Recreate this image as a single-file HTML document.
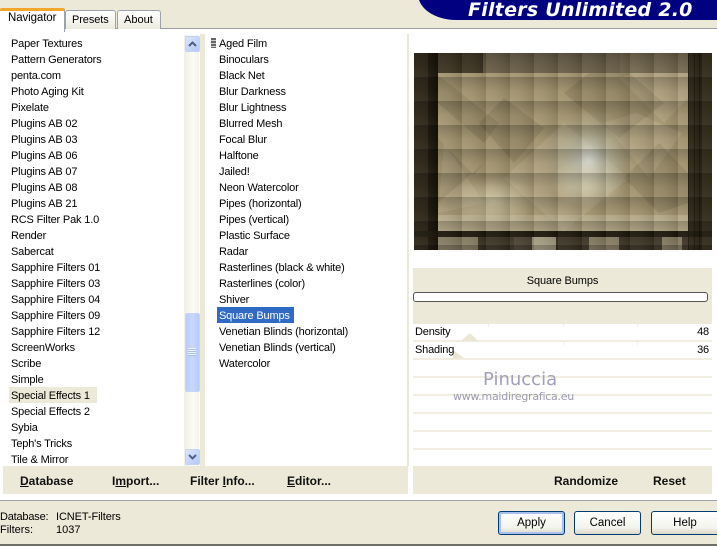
<!DOCTYPE html>
<html><head><meta charset="utf-8">
<style>
html,body{margin:0;padding:0}
body{width:717px;height:546px;overflow:hidden;position:relative;background:#ECE9D8;font-family:"Liberation Sans",sans-serif;font-size:11px;color:#000}
.a{position:absolute}
.r{position:absolute;white-space:nowrap;height:16px;line-height:18px;letter-spacing:-.17px}
.b{position:absolute;font-weight:bold;white-space:nowrap;line-height:16px;top:473px;font-size:12px;color:#111}
.btn{position:absolute;top:511px;height:22px;border:1px solid #003C74;border-radius:3px;background:linear-gradient(#fff,#f4f4ee 70%,#dcd8c8);text-align:center;line-height:22px;font-size:11.5px}
.ln{position:absolute;left:413px;width:299px;height:2px;background:#F1EEE0}
</style></head><body>
<!-- header -->
<div class="a" style="left:418px;top:-30px;width:320px;height:50px;background:#000080;border-bottom-left-radius:38px 26px"></div>
<div class="a" style="left:468px;top:-1px;color:#fff;font:italic bold 19px/22px 'DejaVu Sans',sans-serif;white-space:nowrap;letter-spacing:.25px">Filters Unlimited 2.0</div>
<!-- main panel -->
<div class="a" style="left:0;top:28px;width:717px;height:471px;background:#fff;border-top:1px solid #9C9FA8;border-bottom:1px solid #9CA3AB;box-sizing:content-box"></div>
<!-- tabs -->
<div class="a" style="left:0;top:8px;width:64px;height:21px;background:#fff;border-top:3px solid #F2A62A;border-right:1px solid #9CA3AB;border-radius:2px 2px 0 0;box-sizing:content-box"></div>
<div class="a" style="left:8px;top:11px;line-height:14px;font-size:11.5px;letter-spacing:-.1px">Navigator</div>
<div class="a" style="left:65px;top:10px;width:49px;height:18px;background:linear-gradient(#fff,#ECEBE0);border:1px solid #9CA3AB;border-bottom:0;border-radius:3px 3px 0 0"></div>
<div class="a" style="left:72px;top:13px;line-height:14px;letter-spacing:-.1px">Presets</div>
<div class="a" style="left:117px;top:10px;width:42px;height:18px;background:linear-gradient(#fff,#ECEBE0);border:1px solid #9CA3AB;border-bottom:0;border-radius:3px 3px 0 0"></div>
<div class="a" style="left:124px;top:13px;line-height:14px">About</div>
<!-- separators -->
<div class="a" style="left:200px;top:34px;width:5px;height:432px;background:#ECE9D8"></div>
<div class="a" style="left:407px;top:34px;width:2px;height:432px;background:#ECE9D8"></div>
<!-- scrollbar -->
<div class="a" style="left:184px;top:35px;width:15px;height:431px;background:linear-gradient(90deg,#F1EFE4,#FBFBF7 60%,#F3F1E8)"></div>
<div class="a" style="left:185px;top:36px;width:13px;height:14px;background:linear-gradient(135deg,#DCE6FB,#B4C8F6);border:1px solid #C3D3F6;border-radius:2px"></div>
<svg class="a" style="left:185px;top:36px" width="15" height="16"><path d="M4 10 L7.5 6.5 L11 10" fill="none" stroke="#4D6185" stroke-width="2"/></svg>
<div class="a" style="left:185px;top:313px;width:13px;height:77px;background:linear-gradient(90deg,#BBCDF8,#C9D8FB 50%,#B8CBF6);border:1px solid #C8D6F6;border-radius:2px"></div>
<div class="a" style="left:188px;top:348px;width:8px;height:8px;background:repeating-linear-gradient(#EEF3FE 0 1px,#A9BEEE 1px 2px)"></div>
<div class="a" style="left:185px;top:449px;width:13px;height:14px;background:linear-gradient(135deg,#DCE6FB,#B4C8F6);border:1px solid #C3D3F6;border-radius:2px"></div>
<svg class="a" style="left:185px;top:449px" width="15" height="16"><path d="M4 6 L7.5 9.5 L11 6" fill="none" stroke="#4D6185" stroke-width="2"/></svg>
<!-- left list -->
<div class="a" style="left:9px;top:387px;width:88px;height:16px;background:#ECE9D8"></div>
<div class="r" style="left:11px;top:35px">Paper Textures</div>
<div class="r" style="left:11px;top:51px">Pattern Generators</div>
<div class="r" style="left:11px;top:67px">penta.com</div>
<div class="r" style="left:11px;top:83px">Photo Aging Kit</div>
<div class="r" style="left:11px;top:99px">Pixelate</div>
<div class="r" style="left:11px;top:115px">Plugins AB 02</div>
<div class="r" style="left:11px;top:131px">Plugins AB 03</div>
<div class="r" style="left:11px;top:147px">Plugins AB 06</div>
<div class="r" style="left:11px;top:163px">Plugins AB 07</div>
<div class="r" style="left:11px;top:179px">Plugins AB 08</div>
<div class="r" style="left:11px;top:195px">Plugins AB 21</div>
<div class="r" style="left:11px;top:211px">RCS Filter Pak 1.0</div>
<div class="r" style="left:11px;top:227px">Render</div>
<div class="r" style="left:11px;top:243px">Sabercat</div>
<div class="r" style="left:11px;top:259px">Sapphire Filters 01</div>
<div class="r" style="left:11px;top:275px">Sapphire Filters 03</div>
<div class="r" style="left:11px;top:291px">Sapphire Filters 04</div>
<div class="r" style="left:11px;top:307px">Sapphire Filters 09</div>
<div class="r" style="left:11px;top:323px">Sapphire Filters 12</div>
<div class="r" style="left:11px;top:339px">ScreenWorks</div>
<div class="r" style="left:11px;top:355px">Scribe</div>
<div class="r" style="left:11px;top:371px">Simple</div>
<div class="r" style="left:11px;top:387px">Special Effects 1</div>
<div class="r" style="left:11px;top:403px">Special Effects 2</div>
<div class="r" style="left:11px;top:419px">Sybia</div>
<div class="r" style="left:11px;top:435px">Teph's Tricks</div>
<div class="r" style="left:11px;top:451px">Tile &amp; Mirror</div>
<!-- middle list -->
<div class="a" style="left:211px;top:38px;width:5px;height:10px;background:repeating-linear-gradient(#666 0 2px,#ccc 2px 3px)"></div>
<div class="a" style="left:217px;top:307px;width:77px;height:16px;background:#316AC5"></div>
<div class="r" style="left:219px;top:35px">Aged Film</div>
<div class="r" style="left:219px;top:51px">Binoculars</div>
<div class="r" style="left:219px;top:67px">Black Net</div>
<div class="r" style="left:219px;top:83px">Blur Darkness</div>
<div class="r" style="left:219px;top:99px">Blur Lightness</div>
<div class="r" style="left:219px;top:115px">Blurred Mesh</div>
<div class="r" style="left:219px;top:131px">Focal Blur</div>
<div class="r" style="left:219px;top:147px">Halftone</div>
<div class="r" style="left:219px;top:163px">Jailed!</div>
<div class="r" style="left:219px;top:179px">Neon Watercolor</div>
<div class="r" style="left:219px;top:195px">Pipes (horizontal)</div>
<div class="r" style="left:219px;top:211px">Pipes (vertical)</div>
<div class="r" style="left:219px;top:227px">Plastic Surface</div>
<div class="r" style="left:219px;top:243px">Radar</div>
<div class="r" style="left:219px;top:259px">Rasterlines (black &amp; white)</div>
<div class="r" style="left:219px;top:275px">Rasterlines (color)</div>
<div class="r" style="left:219px;top:291px">Shiver</div>
<div class="r" style="left:219px;top:307px;color:#fff">Square Bumps</div>
<div class="r" style="left:219px;top:323px">Venetian Blinds (horizontal)</div>
<div class="r" style="left:219px;top:339px">Venetian Blinds (vertical)</div>
<div class="r" style="left:219px;top:355px">Watercolor</div>
<!-- left footer -->
<div class="a" style="left:3px;top:466px;width:405px;height:28px;background:#ECE9D8"></div>
<div class="b" style="left:20px"><u>D</u>atabase</div>
<div class="b" style="left:112px">I<u>m</u>port...</div>
<div class="b" style="left:190px">Filter <u>I</u>nfo...</div>
<div class="b" style="left:287px"><u>E</u>ditor...</div>
<!-- preview -->
<svg class="a" style="left:414px;top:53px" width="298" height="197" viewBox="0 0 298 197">
<defs>
<linearGradient id="v" x1="0" y1="0" x2="0" y2="1"><stop offset="0" stop-color="#000" stop-opacity=".22"/><stop offset=".6" stop-color="#000" stop-opacity=".03"/><stop offset="1" stop-color="#fff" stop-opacity=".03"/></linearGradient>
<linearGradient id="h" x1="0" y1="0" x2="1" y2="0"><stop offset="0" stop-color="#fff" stop-opacity=".05"/><stop offset="1" stop-color="#000" stop-opacity=".12"/></linearGradient>
<pattern id="t" x="0" y="0" width="24" height="24" patternUnits="userSpaceOnUse"><rect width="24" height="24" fill="url(#v)"/><rect width="24" height="24" fill="url(#h)"/></pattern>
<radialGradient id="g" cx=".5" cy=".5" r=".5"><stop offset="0" stop-color="#E2E4DE" stop-opacity=".95"/><stop offset=".45" stop-color="#BFC2AE" stop-opacity=".55"/><stop offset="1" stop-color="#B8B090" stop-opacity="0"/></radialGradient>
<radialGradient id="g2" cx=".5" cy=".5" r=".5"><stop offset="0" stop-color="#E8E0BC" stop-opacity=".65"/><stop offset="1" stop-color="#E8E0BC" stop-opacity="0"/></radialGradient>
</defs>
<rect width="298" height="197" fill="#2A2212"/>
<rect x="14" y="0" width="10" height="197" fill="#1A1408"/>
<rect x="262" y="0" width="12" height="197" fill="#17120A"/>
<rect x="274" y="0" width="24" height="197" fill="#2E2616"/>
<rect x="24" y="0" width="45" height="20" fill="#3C3220"/>
<rect x="69" y="0" width="69" height="20" fill="#6A5E46"/>
<rect x="138" y="0" width="68" height="20" fill="#6A5E46"/>
<rect x="206" y="0" width="68" height="20" fill="#74684E"/>
<rect x="24" y="20" width="250" height="158" fill="#A5966F"/>
<g fill="#FFF6DC" fill-opacity=".12">
<polygon points="30,90 70,150 24,160"/><polygon points="90,125 150,70 215,125 150,178"/>
<polygon points="205,25 250,70 274,45 274,20 220,20"/><polygon points="190,70 235,125 268,80 222,60"/>
</g>
<g fill="#332C18" fill-opacity=".13">
<polygon points="24,22 85,70 70,90 24,50"/><polygon points="60,122 24,85 24,150 70,110"/>
<polygon points="210,125 245,90 274,120 274,150 245,160"/>
<polygon points="130,75 100,110 65,70 90,45"/><polygon points="150,40 205,85 250,50 215,20 175,20"/>
</g>
<ellipse cx="175" cy="107" rx="48" ry="52" fill="url(#g)"/>
<ellipse cx="172" cy="130" rx="36" ry="24" fill="url(#g2)"/>
<ellipse cx="80" cy="148" rx="44" ry="26" fill="url(#g2)"/>
<rect x="24" y="162" width="250" height="16" fill="#CFC7AC" fill-opacity=".4"/>
<rect x="0" y="178" width="298" height="6" fill="#1E180C"/>
<rect x="24" y="184" width="250" height="13" fill="#3A3122"/>
<rect x="24" y="184" width="40" height="13" fill="#857A60"/>
<rect x="100" y="184" width="36" height="13" fill="#4A4030"/>
<rect x="118" y="184" width="24" height="13" fill="#A39A80"/>
<rect x="175" y="184" width="30" height="13" fill="#857A60"/>
<rect x="248" y="184" width="20" height="13" fill="#857A60"/>
<rect width="298" height="197" fill="url(#t)"/>
<g stroke="#0C0A04" stroke-opacity=".4" stroke-width="1">
<path d="M274.5 0V197M280.5 0V197M285.5 0V197"/>
</g>
</svg>
<!-- params -->
<div class="a" style="left:413px;top:268px;width:299px;height:56px;background:#ECE9D8"></div>
<div class="a" style="left:413px;top:274px;width:299px;text-align:center;line-height:14px;letter-spacing:-.1px">Square Bumps</div>
<div class="a" style="left:413px;top:292px;width:293px;height:8px;background:#fff;border:1px solid #555;border-radius:3px"></div>
<div class="ln" style="top:340px"></div>
<div class="ln" style="top:358px"></div>
<div class="ln" style="top:376px"></div>
<div class="ln" style="top:394px"></div>
<div class="ln" style="top:412px"></div>
<div class="ln" style="top:430px"></div>
<div class="ln" style="top:448px"></div>
<svg class="a" style="left:450px;top:325px" width="40" height="36"><polygon points="11,16 20,8 28,16" fill="#ECE6D4"/><polygon points="3,25 3,33 14,33" fill="#ECE6D4"/></svg>
<div class="a" style="left:488px;top:324px;width:1px;height:3px;background:#EEE"></div>
<div class="a" style="left:563px;top:324px;width:1px;height:3px;background:#EEE"></div>
<div class="a" style="left:637px;top:324px;width:1px;height:3px;background:#EEE"></div>
<div class="a" style="left:563px;top:342px;width:1px;height:3px;background:#EEE"></div>
<div class="a" style="left:637px;top:342px;width:1px;height:3px;background:#EEE"></div>
<div class="r" style="left:415px;top:323px">Density</div>
<div class="r" style="left:415px;top:341px">Shading</div>
<div class="r" style="right:8px;top:323px">48</div>
<div class="r" style="right:8px;top:341px">36</div>
<!-- watermark -->
<div class="a" style="left:483px;top:369px;font:18px/22px 'DejaVu Sans',sans-serif;color:#A0A0BA;white-space:nowrap">Pinuccia</div>
<div class="a" style="left:453px;top:390px;font:11px/13px 'DejaVu Sans',sans-serif;color:#9A9AAE;white-space:nowrap;letter-spacing:-.25px">www.maidiregrafica.eu</div>
<!-- right footer -->
<div class="a" style="left:413px;top:466px;width:299px;height:28px;background:#ECE9D8"></div>
<div class="b" style="left:554px">Randomize</div>
<div class="b" style="left:653px">Reset</div>
<!-- status -->
<div class="a" style="left:0;top:511px;line-height:13px;white-space:nowrap;letter-spacing:-.2px">Database:</div>
<div class="a" style="left:56px;top:511px;line-height:13px;white-space:nowrap;letter-spacing:-.1px">ICNET-Filters</div>
<div class="a" style="left:0;top:524px;line-height:13px">Filters:</div>
<div class="a" style="left:56px;top:524px;line-height:13px">1037</div>
<!-- buttons -->
<div class="btn" style="left:498px;width:65px;box-shadow:inset 0 0 0 2px #A8C0EC">Apply</div>
<div class="btn" style="left:574px;width:65px">Cancel</div>
<div class="btn" style="left:651px;width:66px">Help</div>
<div class="a" style="left:0;top:544px;width:717px;height:2px;background:#6E6E66"></div>
</body></html>
